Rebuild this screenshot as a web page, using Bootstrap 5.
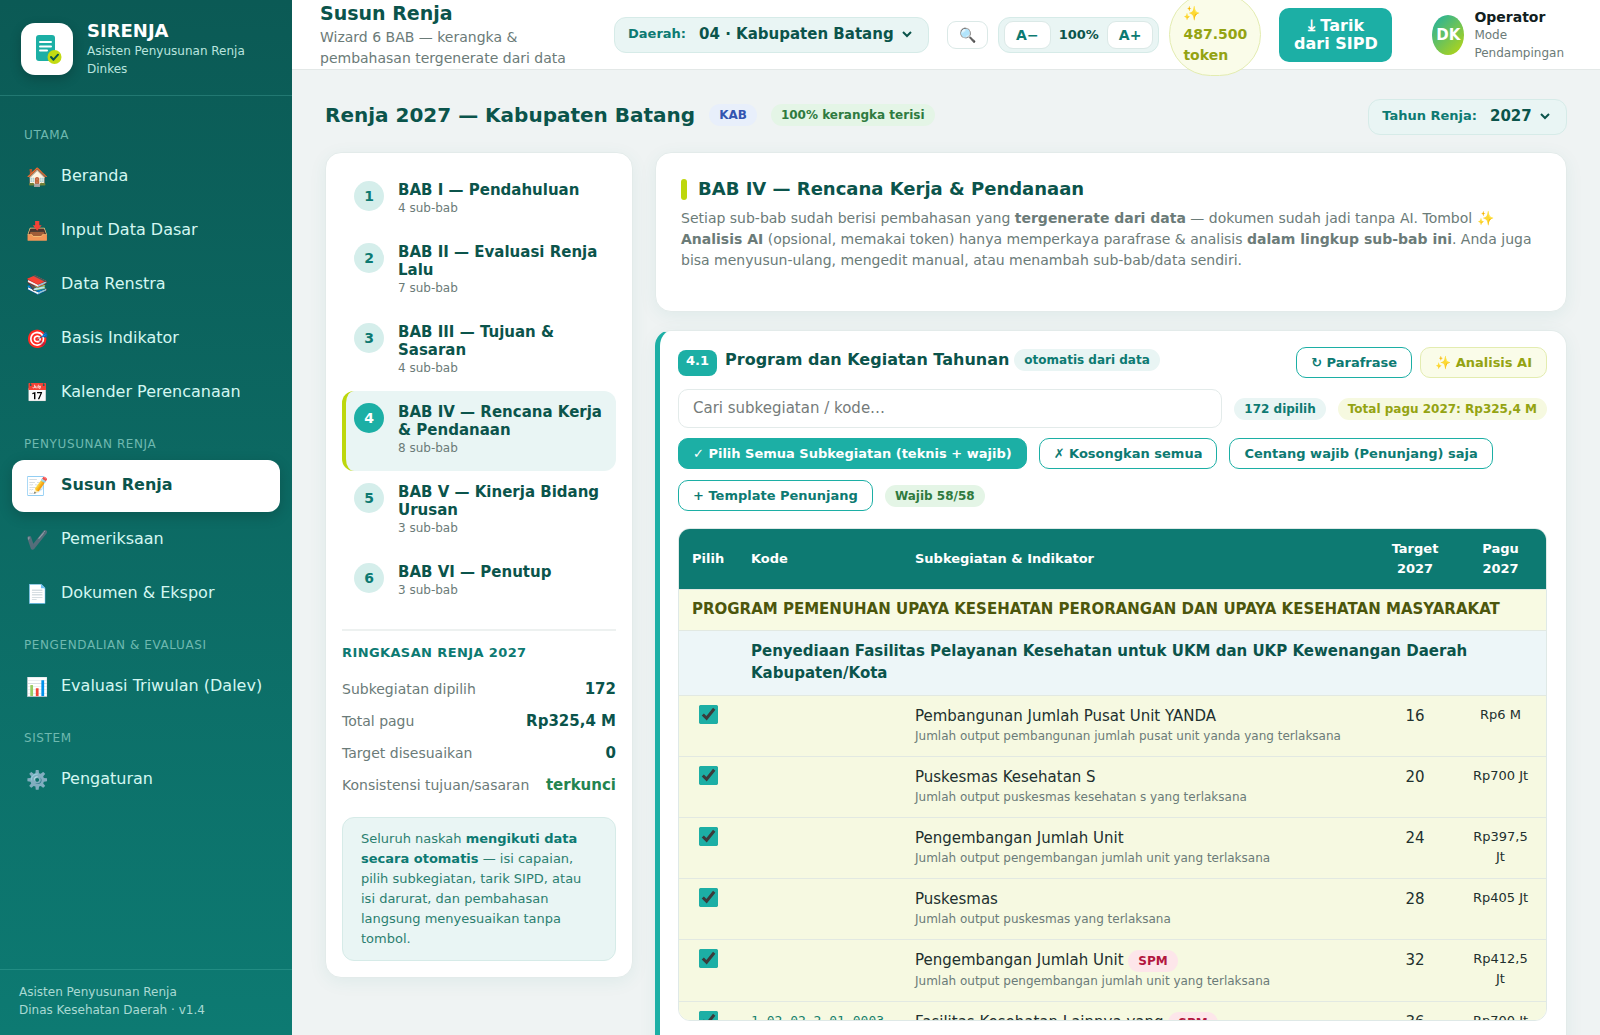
<!DOCTYPE html>
<html lang="id">
<head>
<meta charset="utf-8">
<meta name="viewport" content="width=device-width, initial-scale=1">
<title>SIRENJA — Susun Renja</title>
<link href="https://cdn.jsdelivr.net/npm/bootstrap@5.3.0/dist/css/bootstrap.min.css" rel="stylesheet">
<style>
:root{--teal:#1cafa5;--teal-deep:#0d7a72;--teal-ink:#0b544b;--lime:#bdd70c;--olive:#94a312;--mint:#e9f5f4;--mist:#d5eeeb;--edge:#e3ebea;--muted:#6b7b78}
body{font-family:"DejaVu Sans",sans-serif;font-size:15px;line-height:22px;color:#21302e;background:#eff3f3}
button,input,select{font-family:inherit}
a{text-decoration:none}
.shell{height:100vh;overflow:hidden}
.fs-12{font-size:12px;line-height:18px}
.ink{color:var(--teal-ink)}
.soft{color:var(--muted)}
.locked{color:#24844f}
.min-w-0{min-width:0}

/* sidebar */
.side{width:292px;background:linear-gradient(180deg,#0b5a55 0%,#0d7a72 100%);color:#d8f5f1}
.brand{padding:20px 20px 17px 21px;gap:14px;border-bottom:1px solid rgba(120,220,210,.22)}
.brand-logo{width:52px;height:52px;border-radius:14px;background:#fff;box-shadow:0 4px 12px rgba(0,0,0,.2)}
.brand-name{font-size:18px;line-height:22px;color:#fff}
.brand-sub{color:#b9e4df}
.menu{padding:16px 12px}
.menu-label{padding:14px 12px 7px;letter-spacing:.05em;color:#6fb9b0}
.menu-link{height:52px;margin-bottom:2px;padding:0 14px 2px;gap:12px;border-radius:12px;font-size:16px;color:#d4f7f2}
.menu-link:hover{background:rgba(255,255,255,.08)}
.menu-link.active{background:#fff;color:var(--teal-ink);font-weight:700;box-shadow:0 4px 14px rgba(0,0,0,.18)}
.menu-icon{width:23px;font-size:18px;padding-top:1px}
.side-foot{padding:13px 19px 16px;border-top:1px solid rgba(120,220,210,.2);color:#a9d9d3}

/* top bar */
.topbar{height:70px;padding:0 28px;gap:10px;background:#fff;border-bottom:1px solid #e3e8e7;position:relative;z-index:2}
.topbar-title{font-size:19px;line-height:24px}
.topbar-sub{font-size:14px;line-height:21px;max-width:270px;margin-top:2px}
.picker{height:36px;padding:0 13px 2px;gap:9px;border-radius:12px;background:var(--mint);border:1px solid #d6ebe8}
.picker label{font-size:13px;font-weight:700;color:var(--teal-deep)}
.picker select{border:0;background:transparent;font-size:15px;font-weight:700;color:var(--teal-ink);padding:0 5px 0 0;outline:0}
.tool{height:28px;border-radius:9px;border:1px solid #dbe9e7;background:#fff;font-size:14px;line-height:18px;font-weight:700;color:var(--teal-deep);padding:0 11px}
.zoomer{height:36px;padding:0 5px;gap:8px;border-radius:12px;background:var(--mint);border:1px solid #d6ebe8;font-size:13px;font-weight:700}
.token{width:92px;padding:9px 13px;border-radius:999px;border:1px solid #e3ecb0;background:#fafce9;color:var(--olive);font-size:14px;line-height:21px;font-weight:700}
.btn-pull{width:113px;padding:9px 8px;border-radius:10px;background:var(--teal);border:0;color:#fff;font-size:16px;line-height:18px;font-weight:700}
.btn-pull:hover{background:var(--teal-deep);color:#fff}
.operator{gap:10px;margin-left:30px;padding-right:8px}
.avatar{width:32px;height:40px;border-radius:50%;background:linear-gradient(135deg,#1cafa5,#bdd70c);color:#fff;font-size:15px;font-weight:700}
.operator-name{font-size:14px;line-height:18px;color:#11201e}

/* page */
.page{padding:29px 33px 0}
.page-title{font-size:20px;line-height:28px}
.page-heading{gap:14px;padding-bottom:4px}
.pill{display:inline-block;padding:2px 10px;border-radius:999px;font-size:12px;line-height:18px;font-weight:700;white-space:nowrap}
.pill-mint{background:var(--mint);color:var(--teal-deep)}
.pill-blue{background:#e8effb;color:#3355b0}
.pill-green{background:#e4f5e6;color:#2f7a3f}
.pill-lime{background:#f6f9e0;color:var(--olive)}
.pill-rose{background:#fde6ea;color:#b3173f}
.columns{gap:22px;margin-top:17px}
.panel{background:#fff;border:1px solid var(--edge);border-radius:16px;box-shadow:0 4px 18px rgba(13,122,114,.07)}
.steps{width:308px;padding:16px}
.step{border:0;border-left:4px solid transparent;border-radius:12px;background:transparent;padding:12px 8px 14px;gap:14px}
.step.active{background:var(--mint);border-left-color:var(--lime)}
.step-no{width:30px;height:30px;border-radius:50%;background:var(--mist);color:var(--teal-deep);font-size:14px;font-weight:700}
.step.active .step-no{background:var(--teal);color:#fff}
.step-name{font-size:15px;line-height:18px;font-weight:700}
.recap{margin-top:16px;padding-top:12px;border-top:2px solid #edf1f0}
.recap-title{font-size:13px;line-height:20px;letter-spacing:.03em;color:var(--teal-deep);margin-bottom:10px}
.recap-row{height:32px;font-size:14px}
.recap-row dd{font-size:15px}
.hint{margin-top:16px;padding:11px 18px;border:1px solid #d6ebe8;border-radius:12px;background:var(--mint);color:#2b7f70;font-size:13px;line-height:20px}
.hint strong{color:var(--teal-deep)}

.intro{padding:24px 25px 40px}
.intro-title{font-size:18px;line-height:24px;gap:11px}
.intro-bar{width:6px;height:21px;border-radius:3px;background:var(--lime)}
.intro-text{font-size:14px;line-height:21px;margin-top:7px}
.section{margin-top:18px;padding:16px 19px 40px 18px;border-left:5px solid var(--teal)}
.section-head{gap:8px}
.section-label{gap:5px;padding-bottom:5px}
.section-no{padding:2px 8px 6px;border-radius:8px;background:var(--teal);color:#fff;font-size:13px;line-height:18px;font-weight:700}
.section-title{font-size:16px;line-height:22px}
.act{height:31px;padding:0 14px;border-radius:10px;border:1px solid var(--teal);background:#fff;color:var(--teal-deep);font-size:13px;line-height:18px;font-weight:700;white-space:nowrap}
.act:hover{background:var(--mint)}
.act-fill{background:var(--teal);color:#fff}
.act-lime{background:#fafce9;border-color:#e3ecb0;color:var(--olive)}
.find{height:39px;padding:0 14px 2px;border:1px solid var(--edge);border-radius:10px;font-size:15px}
.find::placeholder{color:#757b7a}
.tools-row{gap:11px 12px;margin-top:10px}
.find-row{gap:12px;margin-top:11px}
.grid-wrap{margin-top:17px;max-height:493px;overflow:auto;scrollbar-width:none;border:1px solid #dfe9e7;border-radius:12px}
.grid-wrap::-webkit-scrollbar{display:none}
.plan{width:100%;table-layout:fixed;border-collapse:separate;border-spacing:0}
.plan th,.plan td{padding:9px 13px 11px;vertical-align:top;border-bottom:1px solid #e2e9e2}
.plan thead th{position:sticky;top:0;z-index:1;padding:10px 13px;vertical-align:middle;background:var(--teal-deep);color:#fff;font-size:13px;line-height:20px}
.plan tbody tr{background:#f6f9e1}
.plan .prog th{padding:8px 13px 10px;color:#4c560c;background:#f8fae3}
.plan .group{background:#edf6f8}
.plan .center{text-align:center}
.plan .money{font-size:13px;line-height:20px;text-align:center}
.plan .code{font-family:"DejaVu Sans Mono",monospace;font-size:13px;line-height:20px;color:#15806c}
.plan input{width:19px;height:19px;display:block;margin:0 auto;accent-color:var(--teal)}
.w-pick{width:59px}.w-code{width:164px}.w-target{width:80px}.w-money{width:91px}
</style>
</head>
<body>
<div class="shell d-flex">
  <aside class="side d-flex flex-column flex-shrink-0">
    <div class="brand d-flex align-items-center">
      <div class="brand-logo d-flex align-items-center justify-content-center flex-shrink-0">
        <svg width="30" height="32" viewBox="0 0 30 32" aria-hidden="true">
          <rect x="4" y="2" width="19" height="26" rx="3" fill="#1cafa5"/>
          <path d="M8 9h11M8 13.500h11M8 17.500h7" stroke="#fff" stroke-width="2" stroke-linecap="round"/>
          <circle cx="22.500" cy="24" r="7" fill="#c3db12"/>
          <path d="M19 24l2.500 2.700 4.500-5" fill="none" stroke="#0b544b" stroke-width="2" stroke-linecap="round" stroke-linejoin="round"/>
        </svg>
      </div>
      <div>
        <div class="brand-name fw-bold">SIRENJA</div>
        <div class="brand-sub fs-12">Asisten Penyusunan Renja Dinkes</div>
      </div>
    </div>
    <nav class="menu flex-grow-1" aria-label="Menu utama">
      <div class="menu-label fs-12">UTAMA</div>
      <a href="#" class="menu-link d-flex align-items-center"><span class="menu-icon">🏠</span>Beranda</a>
      <a href="#" class="menu-link d-flex align-items-center"><span class="menu-icon">📥</span>Input Data Dasar</a>
      <a href="#" class="menu-link d-flex align-items-center"><span class="menu-icon">📚</span>Data Renstra</a>
      <a href="#" class="menu-link d-flex align-items-center"><span class="menu-icon">🎯</span>Basis Indikator</a>
      <a href="#" class="menu-link d-flex align-items-center"><span class="menu-icon">📅</span>Kalender Perencanaan</a>
      <div class="menu-label fs-12">PENYUSUNAN RENJA</div>
      <a href="#" class="menu-link active d-flex align-items-center" aria-current="page"><span class="menu-icon">📝</span>Susun Renja</a>
      <a href="#" class="menu-link d-flex align-items-center"><span class="menu-icon">✔️</span>Pemeriksaan</a>
      <a href="#" class="menu-link d-flex align-items-center"><span class="menu-icon">📄</span>Dokumen &amp; Ekspor</a>
      <div class="menu-label fs-12">PENGENDALIAN &amp; EVALUASI</div>
      <a href="#" class="menu-link d-flex align-items-center"><span class="menu-icon">📊</span>Evaluasi Triwulan (Dalev)</a>
      <div class="menu-label fs-12">SISTEM</div>
      <a href="#" class="menu-link d-flex align-items-center"><span class="menu-icon">⚙️</span>Pengaturan</a>
    </nav>
    <div class="side-foot fs-12">Asisten Penyusunan Renja<br>Dinas Kesehatan Daerah · v1.4</div>
  </aside>

  <div class="flex-grow-1 d-flex flex-column overflow-hidden">
    <header class="topbar d-flex align-items-center flex-shrink-0">
      <div class="flex-grow-1">
        <h1 class="topbar-title ink fw-bold m-0">Susun Renja</h1>
        <div class="topbar-sub soft">Wizard 6 BAB — kerangka &amp; pembahasan tergenerate dari data</div>
      </div>
      <div class="picker d-flex align-items-center flex-shrink-0">
        <label for="daerah">Daerah:</label>
        <select id="daerah"><option>04 · Kabupaten Batang</option></select>
      </div>
      <button type="button" class="tool flex-shrink-0 ms-2" aria-label="Cari">🔍</button>
      <div class="zoomer d-flex align-items-center flex-shrink-0 ink">
        <button type="button" class="tool">A−</button>
        <span>100%</span>
        <button type="button" class="tool">A+</button>
      </div>
      <div class="token flex-shrink-0">✨ 487.500 token</div>
      <button type="button" class="btn btn-pull flex-shrink-0 ms-2">⤓ Tarik dari SIPD</button>
      <div class="operator d-flex align-items-center flex-shrink-0">
        <div class="avatar d-flex align-items-center justify-content-center">DK</div>
        <div>
          <div class="operator-name fw-bold">Operator</div>
          <div class="fs-12 soft">Mode<br>Pendampingan</div>
        </div>
      </div>
    </header>

    <main class="page flex-grow-1 overflow-hidden">
      <div class="d-flex align-items-center">
        <div class="page-heading d-flex align-items-center">
          <h2 class="page-title ink fw-bold m-0">Renja 2027 — Kabupaten Batang</h2>
          <span class="pill pill-blue">KAB</span>
          <span class="pill pill-green">100% kerangka terisi</span>
        </div>
        <div class="picker d-flex align-items-center ms-auto">
          <label for="tahun">Tahun Renja:</label>
          <select id="tahun"><option>2027</option></select>
        </div>
      </div>

      <div class="columns d-flex align-items-start">
        <section class="panel steps flex-shrink-0">
          <button type="button" class="step d-flex align-items-start w-100 text-start">
            <span class="step-no d-flex align-items-center justify-content-center flex-shrink-0">1</span>
            <span><span class="step-name ink d-block">BAB I — Pendahuluan</span><span class="fs-12 soft d-block">4 sub-bab</span></span>
          </button>
          <button type="button" class="step d-flex align-items-start w-100 text-start">
            <span class="step-no d-flex align-items-center justify-content-center flex-shrink-0">2</span>
            <span><span class="step-name ink d-block">BAB II — Evaluasi Renja Lalu</span><span class="fs-12 soft d-block">7 sub-bab</span></span>
          </button>
          <button type="button" class="step d-flex align-items-start w-100 text-start">
            <span class="step-no d-flex align-items-center justify-content-center flex-shrink-0">3</span>
            <span><span class="step-name ink d-block">BAB III — Tujuan &amp; Sasaran</span><span class="fs-12 soft d-block">4 sub-bab</span></span>
          </button>
          <button type="button" class="step active d-flex align-items-start w-100 text-start">
            <span class="step-no d-flex align-items-center justify-content-center flex-shrink-0">4</span>
            <span><span class="step-name ink d-block">BAB IV — Rencana Kerja &amp; Pendanaan</span><span class="fs-12 soft d-block">8 sub-bab</span></span>
          </button>
          <button type="button" class="step d-flex align-items-start w-100 text-start">
            <span class="step-no d-flex align-items-center justify-content-center flex-shrink-0">5</span>
            <span><span class="step-name ink d-block">BAB V — Kinerja Bidang Urusan</span><span class="fs-12 soft d-block">3 sub-bab</span></span>
          </button>
          <button type="button" class="step d-flex align-items-start w-100 text-start">
            <span class="step-no d-flex align-items-center justify-content-center flex-shrink-0">6</span>
            <span><span class="step-name ink d-block">BAB VI — Penutup</span><span class="fs-12 soft d-block">3 sub-bab</span></span>
          </button>

          <div class="recap">
            <h3 class="recap-title fw-bold">RINGKASAN RENJA 2027</h3>
            <dl class="m-0">
              <div class="recap-row d-flex align-items-center justify-content-between"><dt class="fw-normal soft">Subkegiatan dipilih</dt><dd class="m-0 fw-bold ink">172</dd></div>
              <div class="recap-row d-flex align-items-center justify-content-between"><dt class="fw-normal soft">Total pagu</dt><dd class="m-0 fw-bold ink">Rp325,4 M</dd></div>
              <div class="recap-row d-flex align-items-center justify-content-between"><dt class="fw-normal soft">Target disesuaikan</dt><dd class="m-0 fw-bold ink">0</dd></div>
              <div class="recap-row d-flex align-items-center justify-content-between"><dt class="fw-normal soft">Konsistensi tujuan/sasaran</dt><dd class="m-0 fw-bold locked">terkunci</dd></div>
            </dl>
          </div>
          <div class="hint">Seluruh naskah <strong>mengikuti data secara otomatis</strong> — isi capaian, pilih subkegiatan, tarik SIPD, atau isi darurat, dan pembahasan langsung menyesuaikan tanpa tombol.</div>
        </section>

        <div class="flex-grow-1 min-w-0">
          <section class="panel intro">
            <h3 class="intro-title ink fw-bold d-flex align-items-center m-0"><span class="intro-bar"></span>BAB IV — Rencana Kerja &amp; Pendanaan</h3>
            <p class="intro-text soft mb-0">Setiap sub-bab sudah berisi pembahasan yang <strong>tergenerate dari data</strong> — dokumen sudah jadi tanpa AI. Tombol <strong>✨ Analisis AI</strong> (opsional, memakai token) hanya memperkaya parafrase &amp; analisis <strong>dalam lingkup sub-bab ini</strong>. Anda juga bisa menyusun-ulang, mengedit manual, atau menambah sub-bab/data sendiri.</p>
          </section>

          <section class="panel section">
            <div class="section-head d-flex align-items-center">
              <span class="section-no">4.1</span>
              <div class="section-label d-flex align-items-center me-auto">
                <h4 class="section-title ink fw-bold m-0">Program dan Kegiatan Tahunan</h4>
                <span class="pill pill-mint">otomatis dari data</span>
              </div>
              <button type="button" class="act">↻ Parafrase</button>
              <button type="button" class="act act-lime">✨ Analisis AI</button>
            </div>
            <div class="find-row d-flex align-items-center">
              <input type="search" class="find flex-grow-1" placeholder="Cari subkegiatan / kode…" aria-label="Cari subkegiatan / kode">
              <span class="pill pill-mint">172 dipilih</span>
              <span class="pill pill-lime">Total pagu 2027: Rp325,4 M</span>
            </div>
            <div class="tools-row d-flex flex-wrap align-items-center">
              <button type="button" class="act act-fill">✓ Pilih Semua Subkegiatan (teknis + wajib)</button>
              <button type="button" class="act">✗ Kosongkan semua</button>
              <button type="button" class="act">Centang wajib (Penunjang) saja</button>
              <button type="button" class="act">+ Template Penunjang</button>
              <span class="pill pill-green">Wajib 58/58</span>
            </div>

            <div class="grid-wrap">
              <table class="plan">
                <colgroup><col class="w-pick"><col class="w-code"><col><col class="w-target"><col class="w-money"></colgroup>
                <thead>
                  <tr><th scope="col">Pilih</th><th scope="col">Kode</th><th scope="col">Subkegiatan &amp; Indikator</th><th scope="col" class="center">Target 2027</th><th scope="col" class="center">Pagu 2027</th></tr>
                </thead>
                <tbody>
                  <tr class="prog"><th colspan="5">PROGRAM PEMENUHAN UPAYA KESEHATAN PERORANGAN DAN UPAYA KESEHATAN MASYARAKAT</th></tr>
                  <tr class="group"><td></td><th colspan="4" class="ink">Penyediaan Fasilitas Pelayanan Kesehatan untuk UKM dan UKP Kewenangan Daerah Kabupaten/Kota</th></tr>
                  <tr><td><input type="checkbox" checked aria-label="Pilih Pembangunan Jumlah Pusat Unit YANDA"></td><td></td><td>Pembangunan Jumlah Pusat Unit YANDA<div class="fs-12 soft">Jumlah output pembangunan jumlah pusat unit yanda yang terlaksana</div></td><td class="center">16</td><td class="money">Rp6 M</td></tr>
                  <tr><td><input type="checkbox" checked aria-label="Pilih Puskesmas Kesehatan S"></td><td></td><td>Puskesmas Kesehatan S<div class="fs-12 soft">Jumlah output puskesmas kesehatan s yang terlaksana</div></td><td class="center">20</td><td class="money">Rp700 Jt</td></tr>
                  <tr><td><input type="checkbox" checked aria-label="Pilih Pengembangan Jumlah Unit"></td><td></td><td>Pengembangan Jumlah Unit<div class="fs-12 soft">Jumlah output pengembangan jumlah unit yang terlaksana</div></td><td class="center">24</td><td class="money">Rp397,5 Jt</td></tr>
                  <tr><td><input type="checkbox" checked aria-label="Pilih Puskesmas"></td><td></td><td>Puskesmas<div class="fs-12 soft">Jumlah output puskesmas yang terlaksana</div></td><td class="center">28</td><td class="money">Rp405 Jt</td></tr>
                  <tr><td><input type="checkbox" checked aria-label="Pilih Pengembangan Jumlah Unit SPM"></td><td></td><td>Pengembangan Jumlah Unit <span class="pill pill-rose">SPM</span><div class="fs-12 soft">Jumlah output pengembangan jumlah unit yang terlaksana</div></td><td class="center">32</td><td class="money">Rp412,5 Jt</td></tr>
                  <tr><td><input type="checkbox" checked aria-label="Pilih Fasilitas Kesehatan Lainnya"></td><td class="code">1.02.02.2.01.0003</td><td>Fasilitas Kesehatan Lainnya yang <span class="pill pill-rose">SPM</span></td><td class="center">36</td><td class="money">Rp700 Jt</td></tr>
                </tbody>
              </table>
            </div>
          </section>
        </div>
      </div>
    </main>
  </div>
</div>
<script src="https://cdn.jsdelivr.net/npm/bootstrap@5.3.0/dist/js/bootstrap.bundle.min.js"></script>
</body>
</html>
